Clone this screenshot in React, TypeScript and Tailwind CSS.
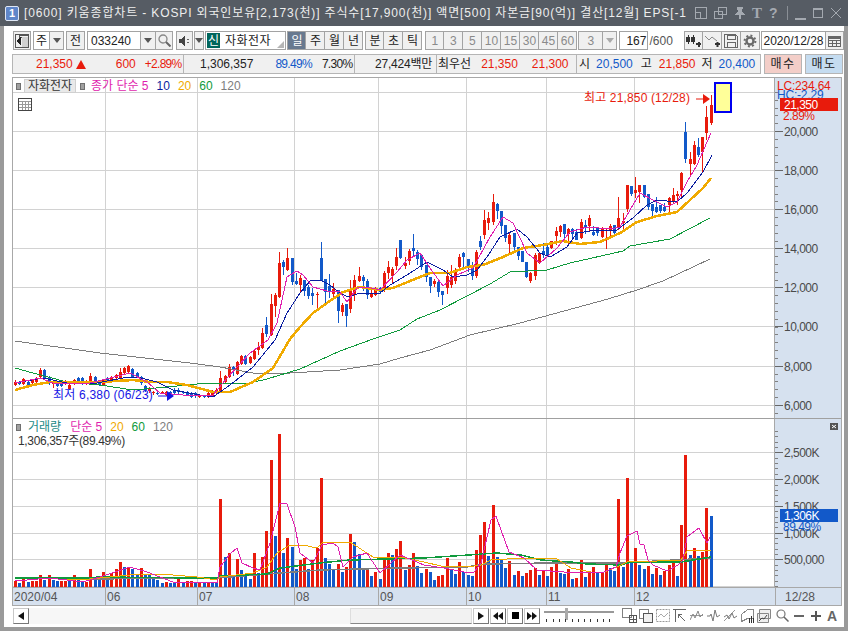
import React from "react";

const RED = "#e81b0c";
const BLUE = "#1259c9";
const LINE = "#d2d2d2";
const AXIS = "#d6e1ef";

// r|b wickTop,bodyTop,bodyBottom,wickBottom in page px
const candleData = `r380,382,385,386 b381,382,384,385 r378,379,384,385 b381,382,385,386 r379,380,383,384 r377,378,382,383 r368,370,377,378 b369,370,378,379 b376,377,383,385 r382,383,384,388
b383,384,386,387 b383,384,386,387 r380,381,384,385 r384,385,389,390 r379,380,384,385 b377,378,382,383 b377,378,384,385 r380,381,384,385 r373,376,381,382 b376,377,382,383
b380,381,385,386 r379,380,385,386 b377,378,380,381 r376,377,381,382 r374,375,378,379 r368,372,378,378 r367,368,373,374 r365,366,372,373 b368,369,377,378 b372,373,377,378
b376,377,383,385 b385,386,390,392 r387,388,391,393 r391,392,393,395 b390,393,394,395 r391,392,393,394 r391,392,395,396 b391,392,394,395 b388,391,393,395 b388,390,392,394
b391,392,393,394 b391,392,395,396 b392,393,397,398 b392,393,396,398 r394,395,397,398 b395,396,397,398 r392,393,397,398 r390,392,396,397 r388,390,393,394 r371,378,393,393
r375,376,382,383 r364,367,377,378 b366,367,370,376 r361,362,374,375 r355,356,364,365 b355,356,364,365 r356,357,363,364 r350,351,359,360 r342,347,350,355 r328,333,348,349
b317,325,334,337 r294,304,335,336 r293,295,306,317 r252,263,297,298 b260,262,267,275 r248,258,270,271 b258,258,282,285 b273,281,284,285 r275,278,285,293 b280,280,291,296
b285,287,296,299 b288,293,296,305 r292,294,295,309 b242,258,281,281 b279,279,292,303 b274,286,292,298 r283,289,294,298 b290,290,311,323 r303,305,312,316 b304,304,316,327
r280,289,309,313 r275,280,295,301 r267,276,281,282 b275,277,281,291 b279,281,295,299 r288,293,297,298 r287,288,295,296 b287,288,292,294 r271,273,290,292 r261,267,273,279
r267,269,276,284 r248,257,266,270 b240,240,258,259 r257,263,266,269 r249,251,261,265 b234,248,251,257 b250,252,259,265 b255,255,267,270 b265,265,277,282 b277,277,286,293
r279,281,284,287 b281,282,292,297 b291,291,295,305 r270,276,288,294 r265,277,285,288 r268,271,281,284 r254,257,267,269 b252,253,257,267 b259,259,267,272 b262,266,276,280
r250,252,276,278 b236,241,247,250 r210,220,235,239 r212,218,223,230 r194,202,222,225 b203,204,211,219 b211,211,226,234 b225,225,238,242 r233,235,244,253 b233,233,247,252
b247,247,256,260 b251,251,262,262 b262,262,277,278 r272,273,281,283 r253,255,276,280 r252,253,263,264 b243,251,255,258 b245,247,255,257 r241,241,248,249 r227,231,236,245
r225,226,232,237 b224,224,234,238 r228,229,234,245 b228,229,234,238 b229,232,240,240 r219,222,238,239 b220,225,227,234 r215,218,226,232 b226,232,235,236 b227,227,233,236
r227,229,237,238 r228,228,229,249 r224,226,231,238 b225,225,233,234 r197,218,228,230 r213,221,223,230 r185,185,209,212 b186,186,194,196 r177,190,193,198 r185,185,192,203
b185,185,197,198 b194,194,207,210 b204,204,211,216 b197,207,212,213 b205,205,211,213 b203,207,211,212 r197,198,205,212 r188,195,202,203 r191,194,196,205 r172,173,190,198
b122,132,159,163 r152,159,164,176 r141,145,164,165 b138,147,155,157 r137,137,152,172 r106,117,133,140 r95,105,123,125`;

const volData = `r581 b583 r579 b582 r581 r581 r575 b580 r575 b580 b581 r581 r581 b581 r575 b580 b582 r582 r569 b580 b579 r572 b579 r573 r569 r562 b567 r567 b569 b574 r568 b575 b575 b579 b580 b583 r582 b583 b582 r579 b582 r581 r581 b583 r582 b583 r583 b583 b583
r499 b557 r553 b577 r559 b570 b575 b579 r553 b573 r557 r531 r460 b536 r434 b553 r538 b547 b569 r560 r558 b569 r560 r548 r478 b558 b564 b569 r564 b572 r567 r534 b542 b554 b569 r568 b576 r572 b579 r559 r553 b555 r549
r541 b570 r565 r553 b566 b573 r569 b572 b580 r576 r575 r558 b569 b574 r562 b572 b575 b576 r550 r535 r522 b556 r505 b557 b560 b568 r561 b575 r571 b576 r573 r570 r568 b575 r570 b576 r567 r564 b573 b574 r569 b579 r578 r560 b577 r571 r567 b572 r573 r562 b568 b571
r499 b567 r478 b562 r548 b565 b569 r566 b574 r568 b575 r571 r565 r562 b576 r525 r455 b555 r548 b556 r552 r508 b516`;

const xAt = (i: number) => Math.round(15 + i * 4.19);

const candles = candleData.split(/\s+/).map((s, i) => {
  const [wt, bt, bb, wb] = s.slice(1).split(",").map(Number);
  return { x: xAt(i), wt, bt, bb, wb, color: s[0] === "r" ? RED : BLUE };
});

const volumes = volData.split(/\s+/).map((s, i) => ({
  x: xAt(i),
  top: Number(s.slice(1)),
  color: s[0] === "r" ? RED : BLUE,
}));

const monthGrid = [105, 197, 294, 378, 466, 546, 634];

const ma5 = "15,383 40,378 53,383 90,383 110,378 130,373 147,382 160,393 183,395 213,395 227,378 250,353 268,340 277,323 287,277 297,271 303,275 313,287 327,291 340,292 347,302 357,288 367,287 380,290 397,272 407,260 420,253 430,268 443,286 457,275 473,268 490,237 503,217 513,223 527,253 540,263 557,248 570,232 587,227 610,229 620,227 640,193 653,200 667,207 677,202 687,182 697,165 711,133";
const ma10 = "15,383 43,378 67,383 97,383 123,378 137,377 157,382 173,390 200,395 213,397 230,385 253,367 275,340 287,313 300,293 310,281 320,280 330,285 340,293 348,297 360,293 380,293 390,285 407,275 427,262 443,270 453,277 467,275 477,270 487,257 500,237 517,229 527,237 540,253 550,257 567,247 577,233 597,230 617,230 633,218 647,205 657,200 677,202 687,193 697,180 703,172 712,155";
const ma20 = "15,390 33,385 50,382 70,382 100,382 133,380 150,382 167,382 187,385 213,392 230,392 253,382 273,368 290,339 300,327 313,313 327,303 343,292 360,287 380,290 393,288 420,277 430,273 450,273 467,267 483,265 503,257 523,248 543,245 563,241 580,244 600,242 620,233 637,222 657,216 677,212 690,200 703,188 711,178";
const ma60 = "15,368 33,373 67,382 100,385 133,390 167,387 197,384 250,383 267,379 300,369 320,360 340,351 373,339 400,330 417,319 440,310 467,296 490,284 510,272 547,270 570,263 623,251 630,246 670,239 710,218";
const ma120 = "15,341 100,353 190,363 220,367 253,373 290,373 340,370 380,364 400,358 430,350 470,335 520,323 608,299 637,290 663,281 710,259";

const vMa5 = "15,581 50,578 83,582 100,577 130,567 147,572 173,582 197,582 217,583 220,567 230,554 237,548 242,563 253,568 260,570 270,543 280,503 287,504 295,527 300,553 313,563 322,545 333,543 338,547 343,567 353,557 367,553 380,573 400,555 424,565 444,568 464,572 474,572 481,563 491,520 496,516 501,530 509,552 524,558 537,570 564,572 587,572 604,572 616,567 620,553 627,536 637,531 640,544 644,545 648,560 653,565 667,571 678,565 683,560 687,537 699,528 707,543 710,537";
const vMa20 = "60,579 80,580 100,578 140,574 173,575 197,577 217,580 220,577 253,573 267,567 277,553 290,545 303,545 317,548 323,542 350,542 373,557 400,557 424,562 441,566 467,567 481,565 491,560 524,558 557,559 571,568 591,572 604,572 617,567 627,562 657,561 681,560 687,551 711,550";
const vMa60 = "15,578 85,578 100,577 197,578 217,578 220,576 267,574 280,568 320,563 350,560 423,558 454,556 497,553 521,555 541,560 571,562 587,564 621,565 631,562 681,562 711,557";
const vMa120 = "15,578 85,578 86,579 197,578 217,578 267,574 320,570 400,568 467,567 484,564 551,563 621,563 711,558";

function Poly({ pts, color, w = 1 }: { pts: string; color: string; w?: number }) {
  return <polyline points={pts} fill="none" stroke={color} strokeWidth={w} shapeRendering="crispEdges" />;
}

function PriceChart() {
  return (
    <svg width={762} height={340} viewBox="13 78 762 340" className="block shrink-0">
      {[92, 131, 170, 209, 248, 287, 326, 366, 405].map((y) => (
        <rect key={y} x={13} y={y} width={762} height={1} fill={LINE} />
      ))}
      {monthGrid.map((x) => (
        <rect key={x} x={x} y={78} width={1} height={340} fill={LINE} />
      ))}
      {candles.map((c) => (
        <g key={c.x} fill={c.color} shapeRendering="crispEdges">
          <rect x={c.x} y={c.wt} width={1} height={c.wb - c.wt} />
          <rect x={c.x - 1} y={c.bt} width={3} height={Math.max(c.bb - c.bt, 1)} />
        </g>
      ))}
      <Poly pts={ma120} color="#7d7d7d" />
      <Poly pts={ma60} color="#0f9a3c" />
      <Poly pts={ma20} color="#f0aa00" w={2.5} />
      <Poly pts={ma10} color="#0a1da0" />
      <Poly pts={ma5} color="#df1fae" />
      <rect x={715} y={83} width={16} height={29} fill="#ffff99" stroke="#0000f0" strokeWidth={2} />
      <text x={584} y={102} fontSize={12} letterSpacing={0.15} fill={RED}>최고 21,850 (12/28)</text>
      <path d="M696 99h8" stroke={RED} strokeWidth={1} />
      <path d="M703 94l7 5-7 5z" fill={RED} />
      <text x={53} y={399} fontSize={12} letterSpacing={0.2} fill="#1414e6">최저 6,380 (06/23)</text>
      <path d="M158 396h10" stroke="#1414e6" strokeWidth={1} />
      <path d="M167 391l7 5-7 5z" fill="#1414e6" />
    </svg>
  );
}

function VolumeChart() {
  return (
    <svg width={762} height={168} viewBox="13 419 762 168" className="block shrink-0">
      {[452, 479, 506, 533, 559, 586].map((y) => (
        <rect key={y} x={13} y={y} width={762} height={1} fill={LINE} />
      ))}
      {monthGrid.map((x) => (
        <rect key={x} x={x} y={418} width={1} height={169} fill={LINE} />
      ))}
      {volumes.map((v) => (
        <rect key={v.x} x={v.x - 1} y={v.top} width={3} height={587 - v.top} fill={v.color} shapeRendering="crispEdges" />
      ))}
      <Poly pts={vMa120} color="#7d7d7d" w={1.5} />
      <Poly pts={vMa60} color="#0f9a3c" w={1.5} />
      <Poly pts={vMa20} color="#f0aa00" />
      <Poly pts={vMa5} color="#df1fae" />
    </svg>
  );
}

const TXT = "#4a4a4a";

function PriceAxis() {
  const minors: number[] = [];
  for (let y = 92; y < 417; y += 7.82) minors.push(Math.round(y));
  const labels = [
    [131, "20,000"],
    [170, "18,000"],
    [209, "16,000"],
    [248, "14,000"],
    [287, "12,000"],
    [326, "10,000"],
    [366, "8,000"],
    [405, "6,000"],
  ] as const;
  return (
    <svg width={66} height={340} viewBox="775 78 66 340" className="block shrink-0">
      {minors.map((y) => (
        <rect key={y} x={775} y={y} width={3} height={1} fill="#808080" />
      ))}
      {labels.map(([y, t]) => (
        <g key={t}>
          <rect x={775} y={y} width={8} height={1} fill="#666" />
          <text x={784} y={y + 5} fontSize={12} letterSpacing={-0.5} fill={TXT}>{t}</text>
        </g>
      ))}
      <text x={777} y={90} fontSize={12} letterSpacing={-0.2} fill={RED}>LC:234.64</text>
      <text x={777} y={99} fontSize={12} letterSpacing={-0.2} fill={BLUE}>HC:-2.29</text>
      <rect x={780} y={98} width={58} height={13} fill={RED} />
      <text x={784} y={109} fontSize={12} letterSpacing={-0.5} fill="#fff">21,350</text>
      <text x={783} y={120} fontSize={12} letterSpacing={-0.5} fill={RED}>2.89%</text>
    </svg>
  );
}

function VolumeAxis() {
  const minors: number[] = [];
  for (let y = 431; y < 587; y += 5.35) minors.push(Math.round(y));
  const labels = [
    [452, "2,500K"],
    [479, "2,000K"],
    [506, "1,500K"],
    [533, "1,000K"],
    [559, "500,000"],
  ] as const;
  return (
    <svg width={66} height={168} viewBox="775 419 66 168" className="block shrink-0">
      {minors.map((y) => (
        <rect key={y} x={775} y={y} width={3} height={1} fill="#808080" />
      ))}
      {labels.map(([y, t]) => (
        <g key={t}>
          <rect x={775} y={y} width={8} height={1} fill="#666" />
          <text x={784} y={y + 5} fontSize={12} letterSpacing={-0.5} fill={TXT}>{t}</text>
        </g>
      ))}
      <rect x={780} y={509} width={58} height={13} fill={BLUE} />
      <text x={784} y={520} fontSize={12} letterSpacing={-0.5} fill="#fff">1,306K</text>
      <text x={783} y={531} fontSize={12} letterSpacing={-0.5} fill={BLUE}>89.49%</text>
      <rect x={830} y={423} width={8} height={7} fill="#555" />
      <path d="M832 425l4 3M836 425l-4 3" stroke="#fff" strokeWidth={1} />
    </svg>
  );
}

function Square() {
  return <span className="w-[5px] h-[7px] bg-[#a0a0a0] border border-[#707070] block" />;
}

function Btn({ className = "", children }: { className?: string; children?: React.ReactNode }) {
  const bg = className.includes("bg-") ? "" : "bg-[#f0f0f0]";
  const fg = className.includes("text-") ? "" : "text-[#222]";
  return (
    <div className={`h-[19px] shrink-0 flex items-center justify-center border border-[#a3a3a3] text-[12px] ${bg} ${fg} ${className}`}>
      {children}
    </div>
  );
}

const Arrow = ({ color = "#555" }: { color?: string }) => (
  <svg width={8} height={5} viewBox="0 0 8 5">
    <path d="M0 0h8L4 5z" fill={color} />
  </svg>
);

function G({ w = 14, h = 14, children }: { w?: number; h?: number; children: React.ReactNode }) {
  return (
    <svg width={w} height={h} viewBox={`0 0 ${w} ${h}`} fill="none" shapeRendering="crispEdges">
      {children}
    </svg>
  );
}

function TitleBar() {
  const c = "#a4a9b0";
  return (
    <div className="h-[26px] shrink-0 bg-[#565c64] flex items-center relative">
      <div className="ml-[5px] w-[14px] h-[15px] rounded-[2px] bg-[#5f86c9] border border-[#dfe7f5] flex items-center justify-center text-white text-[11px] font-bold leading-none">
        1
      </div>
      <div className="ml-[5px] w-[667px] whitespace-nowrap text-[12px] text-[#eeeeee] tracking-[0.86px]">
        [0600] 키움종합차트 - KOSPI 외국인보유[2,173(천)] 주식수[17,900(천)] 액면[500] 자본금[90(억)] 결산[12월] EPS[-1
      </div>
      <div className="ml-[4px] flex items-center">
        <G w={12} h={12}>
          <path d="M.5.5h11v11H.5zM.5 5.5h5v6" stroke={c} />
        </G>
        <span className="ml-[7px] flex">
          <G w={13} h={12}>
            <path d="M4.5.5h8v7h-8zM.5 4.5h8v7H.5z" stroke={c} />
          </G>
        </span>
        <span className="ml-[7px] flex">
          <G w={12} h={12}>
            <path d="M3 0h6l-1 5 3 2v1H1V7l3-2zM5 8h2v4H5z" fill={c} />
          </G>
        </span>
        <span className="ml-[6px] w-[11px] text-[15px] leading-none font-bold text-[#a4a9b0] font-['Liberation_Serif',serif]">T</span>
        <span className="ml-[6px] w-[9px] text-[14px] leading-none font-bold text-[#a4a9b0]">?</span>
        <span className="ml-[9px] w-[1px] h-[14px] bg-[#8a8f96]" />
        <span className="ml-[7px] w-[11px] h-[2px] bg-[#a4a9b0] self-end mb-[1px]" />
        <span className="ml-[7px] w-[10px] h-[10px] border border-[#a4a9b0] border-t-2" />
        <span className="ml-[8px] flex">
          <svg width={10} height={10} viewBox="0 0 10 10">
            <path d="M0 0l10 10M10 0L0 10" stroke={c} />
          </svg>
        </span>
      </div>
    </div>
  );
}

function Toolbar() {
  const d = "#555";
  return (
    <div className="flex h-[19px] mt-[5px] items-center text-[12px]">
      <Btn className="w-[18px]">
        <G>
          <path d="M.5.5h13v13H.5zM4 1h9v2H4z" stroke={d} />
          <path d="M6 3l-5 4 5 4z" fill="#222" />
          <path d="M7 3h6v10H7z" fill="#d0d0d0" />
        </G>
      </Btn>
      <Btn className="ml-[2px] w-[17px] bg-white">주</Btn>
      <Btn className="w-[14px] border-l-0"><Arrow /></Btn>
      <Btn className="ml-[2px] w-[19px]">전</Btn>
      <Btn className="ml-[2px] w-[54px] bg-white justify-start pl-[3px]">033240</Btn>
      <Btn className="w-[15px] border-l-0"><Arrow /></Btn>
      <Btn className="w-[17px] border-l-0">
        <svg width={13} height={13} viewBox="0 0 13 13" fill="none">
          <circle cx={5} cy={5} r={4} stroke="#888" strokeWidth={1.3} />
          <path d="M8 8l4.5 4.5" stroke="#666" strokeWidth={2} />
        </svg>
      </Btn>
      <Btn className="ml-[3px] w-[17px]">
        <G w={12} h={12}>
          <path d="M0 4h3l3-4v12L3 8H0z" fill="#444" />
          <path d="M8 4h2v1H8zM8 7h2v1H8z" fill="#666" />
        </G>
      </Btn>
      <Btn className="w-[10px] ml-[1px]"><Arrow /></Btn>
      <div className="ml-[1px] w-[83px] h-[19px] border border-[#a3a3a3] bg-white flex items-center relative">
        <span className="ml-[1px] w-[13px] h-[15px] bg-[#00665c] text-white text-[12px] flex items-center justify-center">신</span>
        <span className="ml-[5px] text-[12px] text-[#222] tracking-[0.5px]">자화전자</span>
        <span className="absolute right-[1px] bottom-[1px] w-0 h-0 border-l-[7px] border-l-transparent border-b-[7px] border-b-[#b5b5b5]" />
      </div>
      <Btn className="ml-[1px] w-[19px] bg-[#68798f] text-white">일</Btn>
      {["주", "월", "년"].map((t) => (
        <Btn key={t} className="w-[19px] border-l-0">{t}</Btn>
      ))}
      <Btn className="ml-[2px] w-[19px]">분</Btn>
      {["초", "틱"].map((t) => (
        <Btn key={t} className="w-[19px] border-l-0">{t}</Btn>
      ))}
      <div className="ml-[3px] flex">
        {["1", "3", "5", "10", "15", "30", "45", "60"].map((t) => (
          <Btn key={t} className="w-[19px] border-l-0 first:border-l text-[#8a8a8a]">{t}</Btn>
        ))}
      </div>
      <Btn className="ml-[1px] w-[25px] text-[#8a8a8a]">3</Btn>
      <Btn className="w-[14px] border-l-0"><Arrow color="#aaa" /></Btn>
      <Btn className="ml-[2px] w-[29px] bg-white justify-end pr-[1px]">167</Btn>
      <span className="ml-[1px] w-[24px] text-[#555]">/600</span>
      <Btn className="ml-[11px] w-[19px]">
        <G w={15} h={13}>
          <path d="M2 1v9M7 1v9" stroke="#333" />
          <path d="M0 3h4v5H0zM5 3h4v5H5z" fill="#333" />
          <path d="M10 10h5M12.5 8v5" stroke="#333" strokeWidth={2} />
        </G>
      </Btn>
      <Btn className="w-[19px] border-l-0">
        <svg width={15} height={13} viewBox="0 0 15 13" fill="none">
          <path d="M0 2l4 4 3-3 5 4" stroke="#888" />
          <path d="M10 10h5M12.5 8v5" stroke="#333" strokeWidth={2} />
        </svg>
      </Btn>
      <Btn className="w-[19px] border-l-0">
        <G>
          <path d="M.5.5h11l2 2v11H.5z" stroke="#666" />
          <path d="M3 1h8v4H3zM3 8h8v5H3z" stroke="#666" />
        </G>
      </Btn>
      <Btn className="w-[19px] border-l-0">
        <svg width={14} height={14} viewBox="0 0 14 14" fill="none">
          <circle cx={7} cy={7} r={3.5} stroke="#6a6a6a" strokeWidth={2.4} />
          <circle cx={7} cy={7} r={5.4} stroke="#6a6a6a" strokeWidth={2} strokeDasharray="2 2.2" />
        </svg>
      </Btn>
      <Btn className="ml-[1px] w-[65px] bg-white">2020/12/28</Btn>
      <Btn className="w-[18px] border-l-0">
        <G w={13} h={12}>
          <path d="M.5 2.5h12v9H.5zM.5 5.5h12M.5 8.5h12M4.5 5v6M8.5 5v6" stroke="#666" />
          <path d="M0 1h13v3H0z" fill="#666" />
        </G>
      </Btn>
    </div>
  );
}

function InfoRow() {
  const sec = "h-[18px] shrink-0 flex items-center border-r border-[#b5b5b5] text-[12px] whitespace-nowrap";
  return (
    <div className="flex h-[20px] mt-[4px] items-center -ml-[1px]">
      <div className="flex h-[20px] w-[749px] border border-[#b5b5b5] bg-[#f0f0f0]">
        <div className={`${sec} w-[171px] text-[#e81b0c]`}>
          <span className="ml-[23px]">21,350</span>
          <svg className="ml-[3px]" width={10} height={9} viewBox="0 0 10 9">
            <path d="M5 0l5 9H0z" fill={RED} />
          </svg>
          <span className="ml-[30px]">600</span>
          <span className="ml-[9px] tracking-[-0.7px]">+2.89%</span>
        </div>
        <div className={`${sec} w-[171px] text-[#222]`}>
          <span className="ml-[16px]">1,306,357</span>
          <span className="ml-[22px] tracking-[-0.7px] text-[#1259c9]">89.49%</span>
          <span className="ml-[10px] tracking-[-0.7px]">7.30%</span>
        </div>
        <div className={`${sec} w-[82px] text-[#222]`}>
          <span className="ml-[20px] tracking-[-0.2px]">27,424백만</span>
        </div>
        <div className={`${sec} w-[140px] text-[#222]`}>
          <span className="ml-[1px]">최우선</span>
          <span className="ml-[10px] text-[#e81b0c]">21,350</span>
          <span className="ml-[14px] text-[#e81b0c]">21,300</span>
        </div>
        <div className={`${sec} border-r-0 text-[#222]`}>
          <span className="ml-[2px]">시</span>
          <span className="ml-[6px] text-[#1259c9]">20,500</span>
          <span className="ml-[8px]">고</span>
          <span className="ml-[7px] text-[#e81b0c]">21,850</span>
          <span className="ml-[6px]">저</span>
          <span className="ml-[6px] text-[#1259c9]">20,400</span>
        </div>
      </div>
      <div className="ml-[3px] w-[38px] h-[20px] bg-[#f3cec8] border border-[#b5b5b5] flex items-center justify-center text-[12px] tracking-[1.5px] text-[#222]">매수</div>
      <div className="ml-[3px] w-[38px] h-[20px] bg-[#c5dcf0] border border-[#b5b5b5] flex items-center justify-center text-[12px] tracking-[1.5px] text-[#222]">매도</div>
    </div>
  );
}

function PriceLegend() {
  return (
    <div className="absolute left-[3px] top-[1px] flex items-center text-[12px] whitespace-nowrap h-[14px]">
      <Square />
      <span className="ml-[3px] w-[52px] h-[14px] leading-[13px] bg-[#e9e9e9] border border-[#d0d0d0] text-center text-[#333]">자화전자</span>
      <span className="ml-[4px]"><Square /></span>
      <span className="ml-[6px] text-[#df1fae]">종가 단순 5</span>
      <span className="ml-[8px] text-[#0a1da0]">10</span>
      <span className="ml-[8px] text-[#f0aa00]">20</span>
      <span className="ml-[8px] text-[#0f9a3c]">60</span>
      <span className="ml-[8px] text-[#7d7d7d]">120</span>
    </div>
  );
}

function VolumeLegend() {
  return (
    <div className="absolute left-[3px] top-[1px] text-[12px] whitespace-nowrap">
      <div className="flex items-center h-[14px]">
        <Square />
        <span className="ml-[7px] text-[#1b8a85]">거래량</span>
        <span className="ml-[9px] text-[#df1fae]">단순 5</span>
        <span className="ml-[8px] text-[#f0aa00]">20</span>
        <span className="ml-[8px] text-[#0f9a3c]">60</span>
        <span className="ml-[8px] text-[#7d7d7d]">120</span>
      </div>
      <div className="ml-[2px] h-[14px] leading-[14px] text-[#333] tracking-[-0.35px]">1,306,357주(89.49%)</div>
    </div>
  );
}

function DateAxis() {
  const items = [
    [92, "2020/04"],
    [92, "06"],
    [97, "07"],
    [84, "08"],
    [88, "09"],
    [80, "10"],
    [88, "11"],
    [141, "12"],
  ] as const;
  return (
    <div className="flex h-[19px] border-y border-[#a8a8a8] bg-[#d6e1ef] text-[12px] text-[#555]">
      {items.map(([w, t], i) => (
        <div
          key={t}
          style={{ width: w }}
          className={`shrink-0 flex items-center pl-[1px] ${i > 0 ? "border-l border-[#a8a8a8]" : ""}`}
        >
          {t}
        </div>
      ))}
      <div className="flex-1 border-l border-[#a8a8a8] flex items-center pl-[9px]">12/28</div>
    </div>
  );
}

function PlayBtn({ children }: { children: React.ReactNode }) {
  return (
    <div className="w-[16px] h-[16px] shrink-0 flex items-center justify-center bg-white border border-[#c8c8c8] border-b-[#777] border-r-[#777]">
      {children}
    </div>
  );
}

function BottomBar() {
  const g = "#808080";
  return (
    <div className="flex h-[17px] items-center mt-[1px]">
      <PlayBtn>
        <svg width={6} height={8} viewBox="0 0 6 8">
          <path d="M6 0v8L0 4z" fill="#111" />
        </svg>
      </PlayBtn>
      <div className="w-[321px] h-[16px] bg-[#f7f7f7]" />
      <div className="w-[122px] h-[16px] bg-[#f2f2f2] border border-[#ddd] border-b-[#888]" />
      <div className="ml-[1px] flex gap-[1px]">
        <PlayBtn>
          <svg width={6} height={8} viewBox="0 0 6 8"><path d="M0 0v8l6-4z" fill="#111" /></svg>
        </PlayBtn>
        <PlayBtn>
          <svg width={10} height={8} viewBox="0 0 10 8"><path d="M5 0v8L0 4zM10 0v8L5 4z" fill="#111" /></svg>
        </PlayBtn>
        <PlayBtn>
          <span className="w-[7px] h-[7px] bg-black block" />
        </PlayBtn>
        <PlayBtn>
          <svg width={10} height={8} viewBox="0 0 10 8"><path d="M0 0v8l5-4zM5 0v8l5-4z" fill="#111" /></svg>
        </PlayBtn>
      </div>
      <svg className="ml-[4px] shrink-0" width={71} height={17} viewBox="0 0 71 17" shapeRendering="crispEdges">
        <rect x={0} y={4} width={70} height={2} fill="#999" />
        <rect x={21} y={1} width={3} height={12} fill="#aaa" />
        {[2, 9, 15, 21, 28, 34, 40, 46, 53, 59, 65].map((x) => (
          <rect key={x} x={x} y={12} width={1} height={3} fill="#333" />
        ))}
      </svg>
      <div className="ml-[7px] flex items-center h-[17px]">
        <G w={15} h={15}>
          <path d="M.5.5h9v9H.5z" stroke={g} />
          <path d="M7.5 7.5h7v7h-7zM11 8v6M8 11h6" stroke="#555" />
        </G>
        <span className="ml-[2px] flex">
          <G w={14} h={15}>
            <path d="M.5 1.5h9v9H.5z" stroke={g} />
            <path d="M4.5 5.5h9v9h-9z" fill="#f0f0f0" stroke="#555" />
          </G>
        </span>
        <span className="ml-[3px] flex">
          <svg width={14} height={15} viewBox="0 0 14 15" fill="none">
            <path d="M.5 1.5h13v12H.5z" stroke="#999" strokeDasharray="2 1" />
            <path d="M2 9l3-3 3 3 4-4" stroke="#aaa" />
          </svg>
        </span>
        <div className="ml-[2px] w-[15px] h-[17px] bg-white flex items-center justify-center">
          <G w={13} h={13}>
            <path d="M0 .5h13M2.5 1v12" stroke="#666" />
            <path d="M12 12L5 5M5 5v4M5 5h4" stroke="#666" />
          </G>
        </div>
        <span className="ml-[3px] flex">
          <svg width={13} height={13} viewBox="0 0 13 13" fill="none">
            <path d="M0 6.5h13" stroke="#999" />
            <path d="M0 11l3-6 2 4 3-7 2 6 3-3" stroke="#888" />
          </svg>
        </span>
        <span className="ml-[4px] flex">
          <svg width={13} height={13} viewBox="0 0 13 13" fill="none">
            <path d="M0 7h3l1-2 2 7 2-11 2 7 3-2" stroke="#777" />
          </svg>
        </span>
        <span className="ml-[4px] flex">
          <svg width={13} height={13} viewBox="0 0 13 13" fill="none">
            <path d="M0 12L11 1" stroke="#999" />
            <path d="M0 8l3-2 2 4 3-6 2 5 3-2" stroke="#777" />
          </svg>
        </span>
        <span className="ml-[4px] flex">
          <G w={13} h={14}>
            <path d="M.5 5.5l6-5h6v9h-6l-6 3z" stroke="#888" />
            <path d="M8 9h1v5H8zM10 7h1v7h-1zM12 9h1v5h-1z" fill="#333" />
          </G>
        </span>
        <span className="ml-[3px] flex">
          <svg width={14} height={14} viewBox="0 0 14 14" fill="none">
            <path d="M2.5.5h11v9h-11zM.5 4.5h11v9H.5z" fill="#eee" stroke="#888" />
            <path d="M2 12l3-3 2 1 3-4" stroke="#444" />
          </svg>
        </span>
        <span className="ml-[5px] flex">
          <svg width={13} height={13} viewBox="0 0 13 13" fill="none">
            <circle cx={5} cy={5} r={4} stroke="#777" strokeWidth={1.2} />
            <path d="M8 8l4.5 4.5" stroke="#666" strokeWidth={1.5} />
          </svg>
        </span>
        <span className="ml-[5px] w-[10px] h-[2px] bg-[#666]" />
        <span className="ml-[7px] flex">
          <G w={10} h={10}>
            <path d="M0 4h10v2H0zM4 0h2v10H4z" fill="#555" />
          </G>
        </span>
        <span className="ml-[6px] text-[14px] font-bold leading-none text-[#666]">A</span>
      </div>
    </div>
  );
}

export default function App() {
  const split = `linear-gradient(to right, #fff 762px, ${AXIS} 762px)`;
  return (
    <div className="w-[848px] h-[631px] overflow-hidden flex flex-col bg-white font-['Liberation_Sans','Noto_Sans_CJK_KR',sans-serif]">
      <TitleBar />
      <div className="flex-1 border-x-4 border-b-4 border-[#9a9a9a] pl-[9px] overflow-hidden">
        <Toolbar />
        <InfoRow />
        <div className="mt-[3px] -ml-[1px] w-[830px] border-l border-t border-r border-[#a8a8a8]">
          <div className="flex relative" style={{ background: split }}>
            <PriceChart />
            <div className="border-l border-[#a8a8a8] -ml-[1px] flex">
              <PriceAxis />
            </div>
            <PriceLegend />
            <svg className="absolute left-[5px] top-[20px]" width={14} height={13} viewBox="0 0 14 13" fill="none" shapeRendering="crispEdges">
              <path d="M.5.5h13v12H.5z" stroke="#444" />
              <path d="M1 3.5h12M1 6.5h12M1 9.5h12M4.5 3v9M7.5 3v9M10.5 3v9" stroke="#999" />
            </svg>
          </div>
          <div className="h-[1px] bg-[#a0a0a0]" />
          <div className="flex relative" style={{ background: split }}>
            <VolumeChart />
            <div className="border-l border-[#a8a8a8] -ml-[1px] flex">
              <VolumeAxis />
            </div>
            <VolumeLegend />
          </div>
          <DateAxis />
        </div>
        <BottomBar />
      </div>
    </div>
  );
}
